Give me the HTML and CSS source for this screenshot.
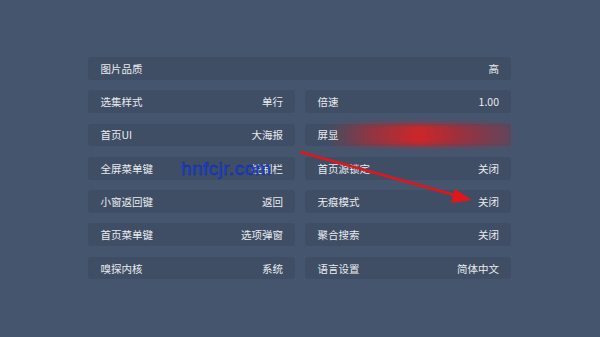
FILE: index.html
```html
<!DOCTYPE html>
<html lang="zh-CN">
<head>
<meta charset="UTF-8">
<meta name="viewport" content="width=device-width, initial-scale=1.0">
<title>设置</title>
<link rel="stylesheet" href="styles.css">
</head>
<body>

<div class="tela">
    <div class="grade">
        <div class="item largo"><span>图片品质</span><span>高</span></div>

        <div class="item"><span>选集样式</span><span>单行</span></div>
        <div class="item"><span>倍速</span><span>1.00</span></div>

        <div class="item"><span>首页UI</span><span>大海报</span></div>
        <div class="item destaque"><span>屏显</span><span></span></div>

        <div class="item"><span>全屏菜单键</span><span>控制栏</span></div>
        <div class="item"><span>首页源锁定</span><span>关闭</span></div>

        <div class="item"><span>小窗返回键</span><span>返回</span></div>
        <div class="item"><span>无痕模式</span><span>关闭</span></div>

        <div class="item"><span>首页菜单键</span><span>选项弹窗</span></div>
        <div class="item"><span>聚合搜索</span><span>关闭</span></div>

        <div class="item"><span>嗅探内核</span><span>系统</span></div>
        <div class="item"><span>语言设置</span><span>简体中文</span></div>
    </div>

    <!-- marca d'agua e seta por cima da tela -->
    <div class="marca">hnfcjr.com</div>
    <svg class="seta" width="600" height="337" viewBox="0 0 600 337">
        <line x1="300" y1="152" x2="458" y2="196" stroke="#e3151a" stroke-width="2.6"/>
        <polygon points="472,200 455,189 451,203" fill="#e3151a"/>
    </svg>
</div>

</body>
</html>
```

FILE: styles.css
```css
html, body {
    margin: 0;
    padding: 0;
}
body {
    font-family: "Noto Sans CJK SC", "Noto Sans", sans-serif;
    background-color: #46556e;
    color: #e8ebef;
}
.tela {
    position: relative;
    width: 600px;
    height: 337px;
    overflow: hidden;
    padding-top: 57px;
    box-sizing: border-box;
}
.grade {
    width: 423px;
    margin-left: 88px;
    display: grid;
    grid-template-columns: 207px 206px;
    column-gap: 10px;
    row-gap: 10.6px;
}
.item {
    height: 22.7px;
    background-color: #404e65;
    border-radius: 3px;
    display: flex;
    align-items: center;
    justify-content: space-between;
    padding: 0 12px 0 12.5px;
    font-size: 10.5px;
    box-sizing: border-box;
}
.largo {
    grid-column: 1 / 3;
}
.destaque {
    position: relative;
}
.destaque::before {
    content: "";
    position: absolute;
    left: 22px;
    right: 0;
    top: 0;
    bottom: 0;
    background: linear-gradient(90deg, rgba(200, 35, 40, 0) 0%, rgba(190, 40, 48, 0.6) 22%, rgba(212, 36, 38, 0.95) 50%, rgba(185, 40, 50, 0.75) 72%, rgba(130, 62, 85, 0.5) 100%);
    filter: blur(2.5px);
}
.destaque span {
    position: relative;
}
.marca {
    position: absolute;
    left: 181px;
    top: 158px;
    font-family: "Liberation Sans", Arial, sans-serif;
    font-size: 19px;
    letter-spacing: 0.4px;
    color: #1f40d0;
    -webkit-text-stroke: 0.4px #0a2a9a;
}
.seta {
    position: absolute;
    left: 0;
    top: 0;
}
```
